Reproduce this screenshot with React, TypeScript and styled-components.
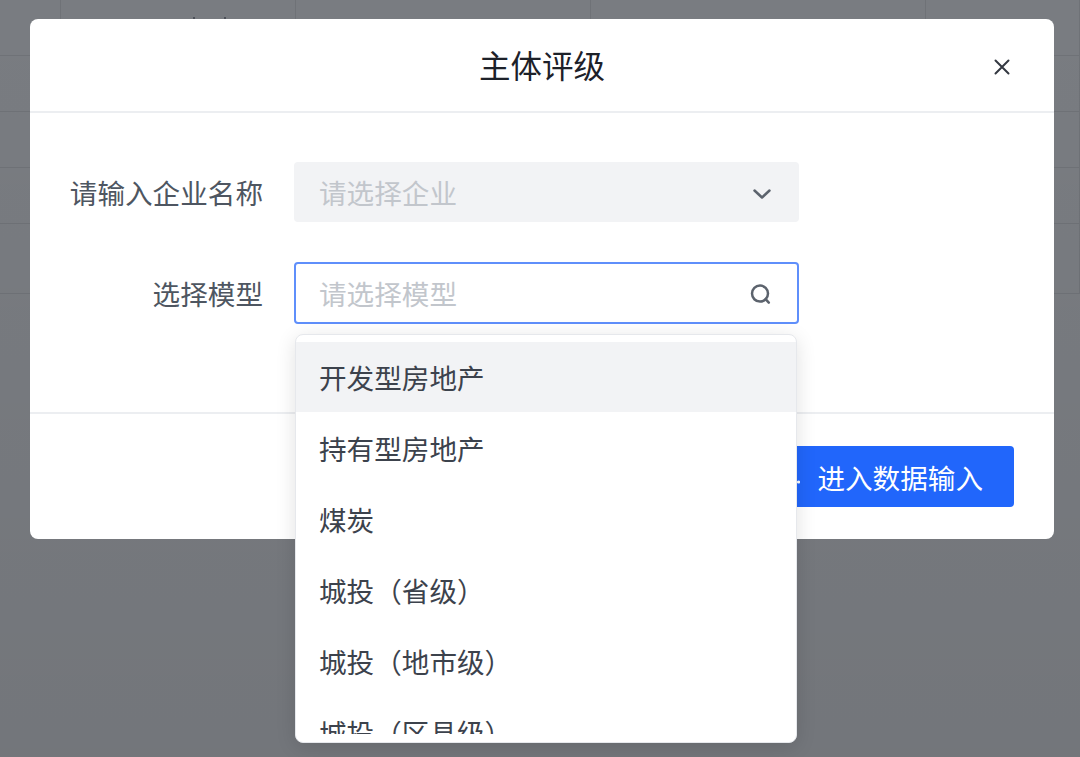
import React from "react";
import styled, { createGlobalStyle } from "styled-components";

const GlobalStyle = createGlobalStyle`
  html, body {
    margin: 0;
    padding: 0;
    background: #797c81;
  }
  * {
    box-sizing: border-box;
  }
`;

const models = [
  "开发型房地产",
  "持有型房地产",
  "煤炭",
  "城投（省级）",
  "城投（地市级）",
  "城投（区县级）",
];

const App = () => {
  return (
    <Page>
      <GlobalStyle />
      <BackTable>
        {Array.from({ length: 25 }).map((_, i) => (
          <BackCell key={i} $marked={i === 1} />
        ))}
      </BackTable>
      <Overlay>
        <Modal>
          <Header>
            <Title>主体评级</Title>
            <CloseButton aria-label="关闭">
              <svg width="16" height="16" viewBox="0 0 16 16" fill="none">
                <path
                  d="M1.5 1.5 14.5 14.5M14.5 1.5 1.5 14.5"
                  stroke="#343942"
                  strokeWidth="2"
                  strokeLinecap="round"
                />
              </svg>
            </CloseButton>
          </Header>
          <Body>
            <Field>
              <Label>请输入企业名称</Label>
              <Select $disabled>
                <Placeholder>请选择企业</Placeholder>
                <ChevronIcon width="18" height="10" viewBox="0 0 18 10" fill="none">
                  <path
                    d="M1.5 1.5 9 8.5 16.5 1.5"
                    stroke="#5c636d"
                    strokeWidth="2.5"
                    strokeLinecap="round"
                    strokeLinejoin="round"
                  />
                </ChevronIcon>
              </Select>
            </Field>
            <Field>
              <Label>选择模型</Label>
              <SelectWrap>
                <Select>
                  <Placeholder>请选择模型</Placeholder>
                  <SearchIcon width="21" height="20" viewBox="0 0 21 20" fill="none">
                    <circle cx="10" cy="9.6" r="8" stroke="#5c636d" strokeWidth="2.5" />
                    <path d="M15.6 15.2 18.8 18.6" stroke="#5c636d" strokeWidth="2.5" strokeLinecap="round" />
                  </SearchIcon>
                </Select>
                <Dropdown>
                  <List>
                    {models.map((model, i) => (
                      <Option key={model} $active={i === 0}>
                        {model}
                      </Option>
                    ))}
                  </List>
                </Dropdown>
              </SelectWrap>
            </Field>
          </Body>
          <Footer>
            <PrimaryButton>
              <svg width="28" height="28" viewBox="0 0 28 28" fill="none">
                <circle cx="26.5" cy="19" r="1.6" fill="#fff" />
              </svg>
              进入数据输入
            </PrimaryButton>
          </Footer>
        </Modal>
      </Overlay>
    </Page>
  );
};

export default App;

const Page = styled.div`
  position: relative;
  width: 1080px;
  height: 757px;
  overflow: hidden;
  font-family: "Noto Sans CJK SC", "Liberation Sans", sans-serif;
`;

const BackTable = styled.div`
  display: grid;
  grid-template-columns: 61px 235px 295px 335px 154px;
  grid-template-rows: 56px 56px 56px 56px 70px;
  background: #797c81;
`;

const BackCell = styled.div<{ $marked?: boolean }>`
  border-right: 1px solid #6f7277;
  border-bottom: 1px solid #6f7277;
  ${(p) =>
    p.$marked &&
    `
    background-image: linear-gradient(#4c5058, #4c5058), linear-gradient(#4c5058, #4c5058);
    background-size: 2px 2px;
    background-position: 132px 17px, 163px 17px;
    background-repeat: no-repeat;
  `}
`;

const Overlay = styled.div`
  position: absolute;
  inset: 0;
  padding: 19px 26px 0 30px;
  background: linear-gradient(rgba(0, 0, 0, 0), rgba(0, 0, 0, 0.05));
`;

const Modal = styled.div`
  display: flex;
  flex-direction: column;
  width: 1024px;
  height: 520px;
  background: #fff;
  border-radius: 8px;
`;

const Header = styled.div`
  position: relative;
  display: flex;
  align-items: center;
  justify-content: center;
  height: 94px;
  padding-bottom: 3px;
  border-bottom: 2px solid #eceef1;
`;

const Title = styled.h2`
  margin: 0;
  font-size: 31.5px;
  font-weight: 400;
  color: #1d2129;
`;

const CloseButton = styled.button`
  position: absolute;
  right: 44px;
  top: 40px;
  display: flex;
  padding: 0;
  border: 0;
  background: none;
`;

const Body = styled.div`
  display: flex;
  flex-direction: column;
  gap: 40px;
  height: 301px;
  padding-top: 49px;
  border-bottom: 2px solid #eceef1;
`;

const Field = styled.div`
  display: flex;
  align-items: center;
  gap: 31px;
`;

const Label = styled.label`
  width: 233px;
  text-align: right;
  font-size: 27.6px;
  color: #4e5661;
`;

const SelectWrap = styled.div`
  position: relative;
`;

const Select = styled.div<{ $disabled?: boolean }>`
  display: flex;
  align-items: center;
  justify-content: space-between;
  width: 505px;
  height: ${(p) => (p.$disabled ? "60px" : "62px")};
  padding: ${(p) => (p.$disabled ? "0 28px 0 25px" : "0 26px 0 23px")};
  border-radius: 4px;
  background: ${(p) => (p.$disabled ? "#f2f3f5" : "#fff")};
  border: ${(p) => (p.$disabled ? "none" : "2px solid #5f8ffb")};
`;

const Placeholder = styled.span`
  font-size: 27.6px;
  line-height: 40px;
  margin-top: -1px;
  color: #c2c6cc;
`;

const ChevronIcon = styled.svg`
  margin-top: 3px;
`;

const SearchIcon = styled.svg`
  margin-top: 2px;
`;

const Dropdown = styled.div`
  position: absolute;
  top: 72px;
  left: 1px;
  width: 502px;
  height: 409px;
  padding: 7px 0 8px;
  background: #fff;
  border: 1px solid #e6e8ec;
  border-radius: 8px;
  box-shadow: 0 4px 20px rgba(0, 0, 0, 0.12);
`;

const List = styled.div`
  height: 100%;
  overflow: hidden;
`;

const Option = styled.div<{ $active?: boolean }>`
  display: flex;
  align-items: center;
  height: 70px;
  margin-bottom: 1px;
  padding-left: 23px;
  font-size: 27.6px;
  color: #3c424c;
  background: ${(p) => (p.$active ? "#f2f3f5" : "transparent")};
`;

const Footer = styled.div`
  display: flex;
  justify-content: flex-end;
  padding: 32px 40px 0 0;
`;

const PrimaryButton = styled.button`
  display: flex;
  align-items: center;
  gap: 17px;
  height: 61px;
  padding: 0 31px 0 24px;
  border: 0;
  border-radius: 4px;
  background: #2166fb;
  color: #fff;
  font-family: inherit;
  font-size: 27.6px;
`;
